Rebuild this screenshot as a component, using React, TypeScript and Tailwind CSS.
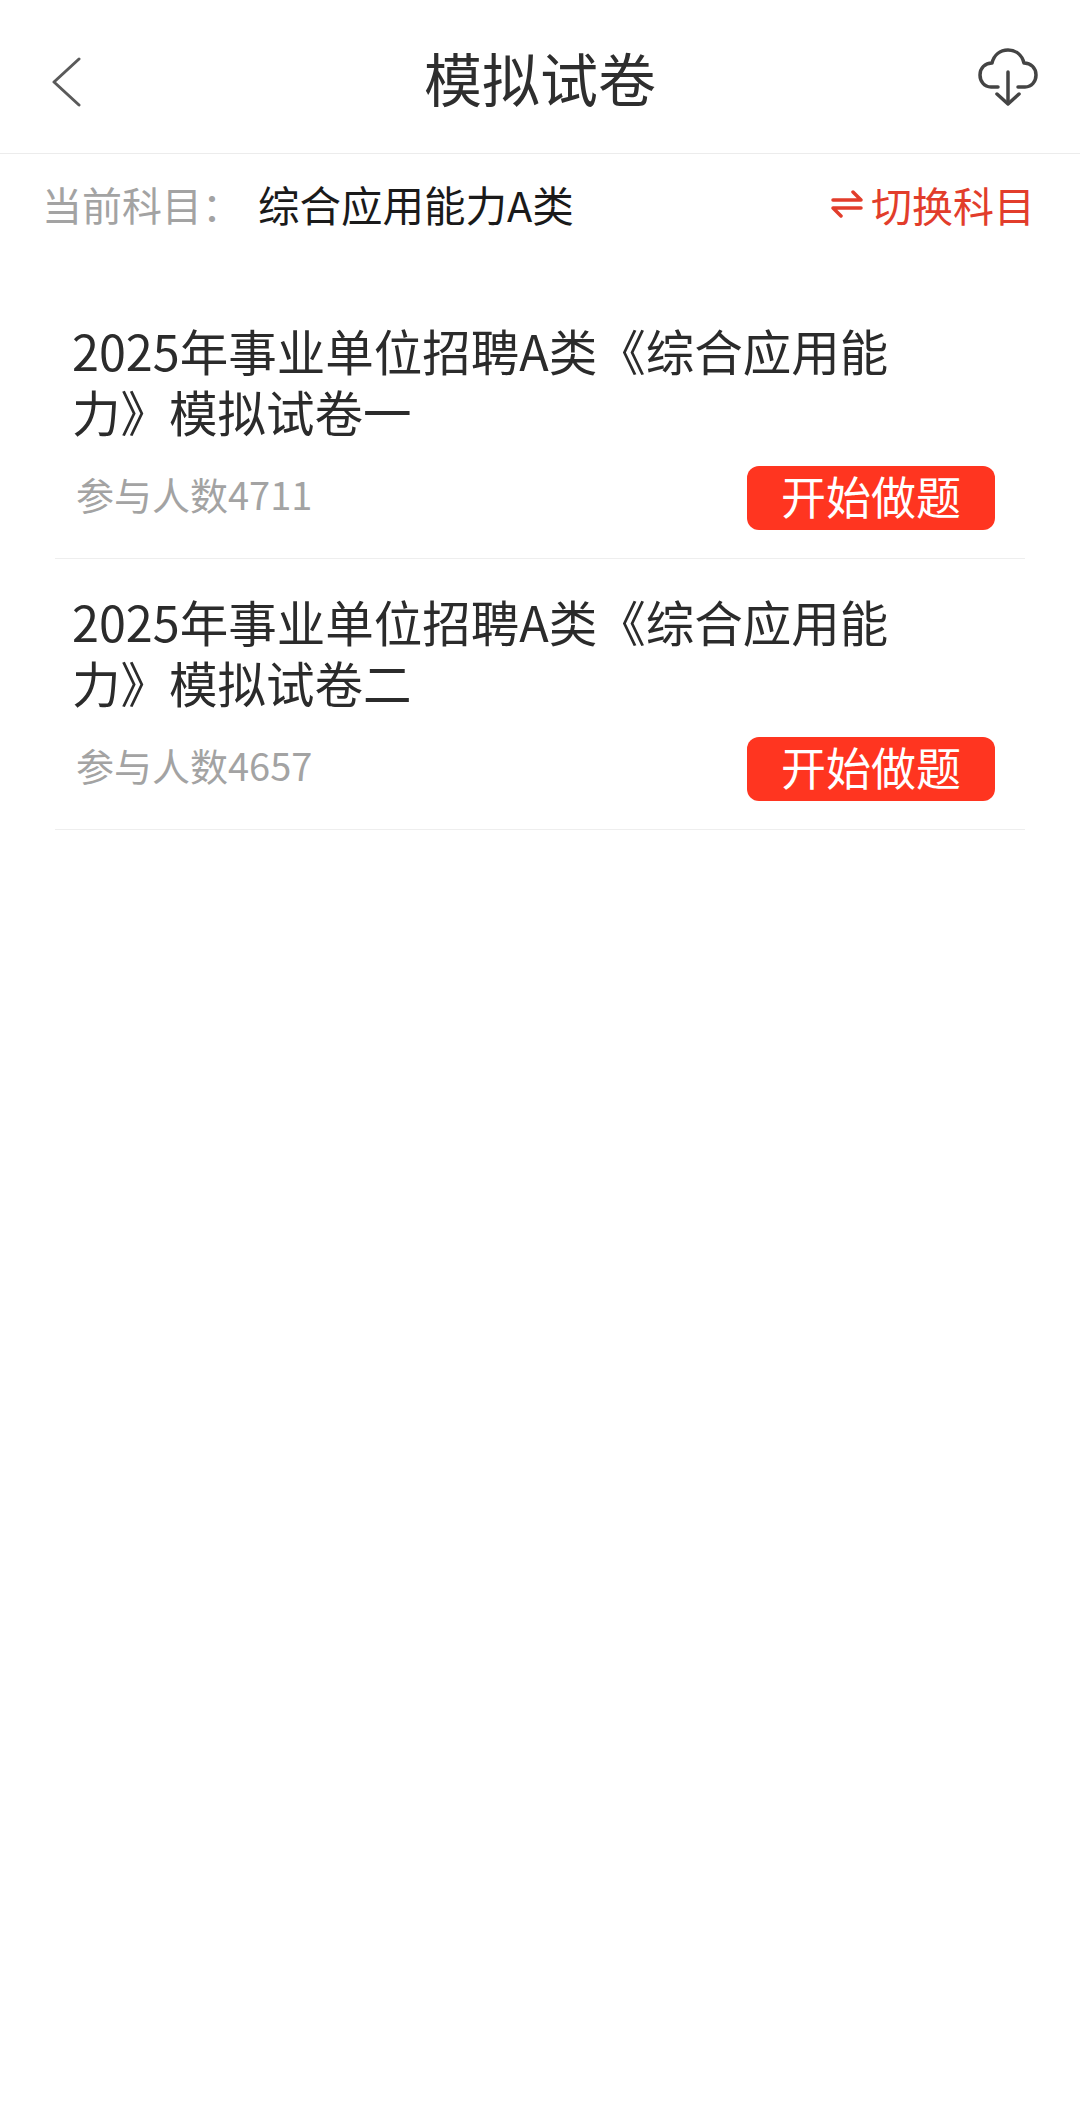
const font = { fontFamily: '"Noto Sans CJK SC", sans-serif' };

const papers = [
  { title: "2025年事业单位招聘A类《综合应用能力》模拟试卷一", count: 4711 },
  { title: "2025年事业单位招聘A类《综合应用能力》模拟试卷二", count: 4657 },
];

function PaperRow({ title, count }: { title: string; count: number }) {
  return (
    <li className="pt-[32px] pb-[28px] border-b border-[#eeeeee]">
      <div className="ml-[17px] w-[830px] text-[48.5px] leading-[61px] text-[#2b2b2b]">{title}</div>
      <div className="mt-[24px] flex items-center justify-between pl-[21px] pr-[30px]">
        <span className="pb-[8px] text-[38px] leading-[48px] text-[#a3a3a3]">参与人数{count}</span>
        <button className="w-[248px] h-[64px] pb-[4px] rounded-[12px] bg-[#ff3520] text-[45px] leading-[60px] text-white">
          开始做题
        </button>
      </div>
    </li>
  );
}

export default function App() {
  return (
    <div className="min-h-[2114px] bg-white" style={font}>
      <header className="h-[154px] flex items-center border-b border-[#ececec] px-[42px]">
        <div className="flex-1">
          <svg className="mt-[10px] ml-[9px]" width="30" height="50" viewBox="0 0 30 50" fill="none" stroke="#5a5a5a" strokeWidth="3" strokeLinecap="round" strokeLinejoin="round">
            <path d="M28 2 L3 25 L28 48" />
          </svg>
        </div>
        <h1 className="text-[58px] leading-[72px] text-[#2e2e2e]">模拟试卷</h1>
        <div className="flex-1 flex justify-end">
          <svg width="60" height="58" viewBox="0 0 60 58" fill="none" stroke="#444444" strokeWidth="3.5" strokeLinecap="round" strokeLinejoin="round">
            <path d="M20 39 H13 C6 39 2 33 2 27 C2 20 7 15 14 15 C16 7 22 2 30 2 C38 2 44 7 46 15 C53 15 58 20 58 27 C58 33 54 39 47 39 H40" />
            <path d="M30 24 V55" />
            <path d="M19 46 L30 56 L41 46" />
          </svg>
        </div>
      </header>
      <div className="h-[134px] pt-[18px] pl-[42px] pr-[45px] flex items-start justify-between text-[40px] leading-[64px]">
        <div className="flex items-center">
          <span className="text-[#a3a3a3] w-[216px]">当前科目：</span>
          <span className="text-[41.5px] text-[#1a1a1a]">综合应用能力A类</span>
        </div>
        <div className="flex items-center gap-[8px] text-[#e23d2b]">
          <svg width="32" height="28" viewBox="0 0 32 28" fill="none" stroke="#e23d2b" strokeWidth="3.5" strokeLinecap="round" strokeLinejoin="round">
            <path d="M2 10 H30 L22 2" />
            <path d="M30 18 H2 L10 26" />
          </svg>
          <span className="text-[41px]">切换科目</span>
        </div>
      </div>
      <ul className="mx-[55px]">
        {papers.map((p) => (
          <PaperRow key={p.title} title={p.title} count={p.count} />
        ))}
      </ul>
    </div>
  );
}
